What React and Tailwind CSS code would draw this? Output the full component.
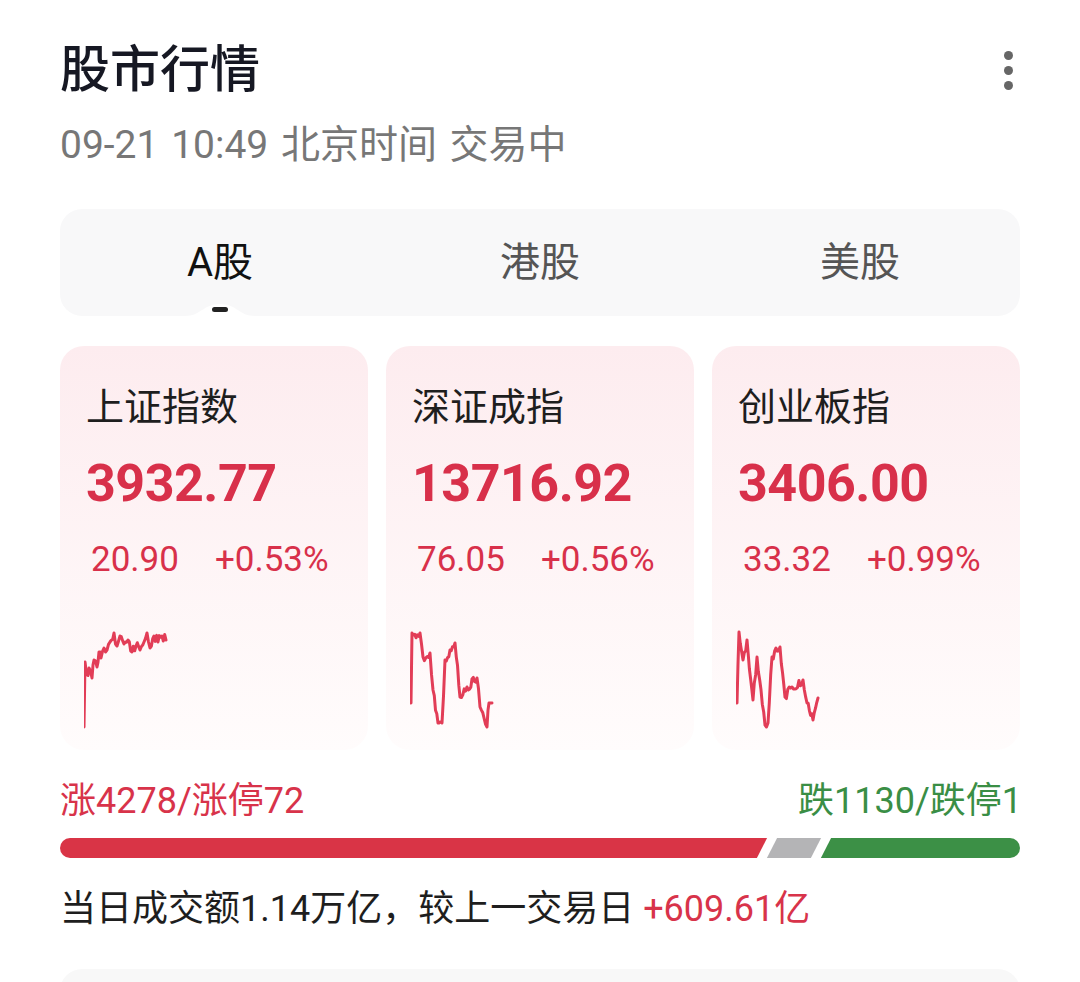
import React from 'react';

// jagged sparkline from a few key points
function sparkPoints(keys, amp, seed) {
  let s = seed;
  const rnd = () => {
    s = (s * 9301 + 49297) % 233280;
    return s / 233280;
  };
  const out = [];
  for (let i = 0; i < keys.length - 1; i++) {
    const [x1, y1] = keys[i];
    const [x2, y2] = keys[i + 1];
    const n = Math.max(1, Math.round((x2 - x1) / 1.3));
    for (let k = 0; k < n; k++) {
      const t = k / n;
      const j = k === 0 ? 0 : (rnd() - 0.5) * 2 * amp;
      const y = Math.min(97, Math.max(2, y1 + (y2 - y1) * t + j));
      out.push(`${(x1 + (x2 - x1) * t).toFixed(1)},${y.toFixed(1)}`);
    }
  }
  const last = keys[keys.length - 1];
  out.push(`${last[0]},${last[1]}`);
  return out.join(' ');
}

const indices = [
  {
    name: '上证指数',
    value: '3932.77',
    diff: '20.90',
    pct: '+0.53%',
    keys: [
      [0, 97], [1, 32], [3, 45], [5, 38], [8, 48], [10, 30], [13, 37], [15, 22], [17, 28],
      [20, 18], [23, 20], [26, 12], [30, 3], [33, 16], [36, 6], [40, 14], [44, 10], [48, 22],
      [52, 16], [56, 20], [60, 12], [63, 3], [66, 18], [70, 6], [74, 12], [78, 6], [82, 10],
    ],
    seed: 11,
  },
  {
    name: '深证成指',
    value: '13716.92',
    diff: '76.05',
    pct: '+0.56%',
    keys: [
      [1, 73], [2, 3], [10, 3], [13, 27], [20, 23], [23, 60], [28, 93], [32, 93], [35, 30],
      [40, 20], [45, 13], [50, 67], [57, 57], [67, 48], [70, 77], [77, 97], [79, 73], [82, 73],
    ],
    seed: 37,
  },
  {
    name: '创业板指',
    value: '3406.00',
    diff: '33.32',
    pct: '+0.99%',
    keys: [
      [1, 73], [3, 2], [7, 30], [11, 10], [17, 70], [21, 27], [29, 95], [32, 93], [36, 27],
      [44, 17], [49, 67], [56, 57], [67, 50], [71, 73], [77, 90], [82, 68],
    ],
    seed: 73,
  },
];

function IndexCard({ item }) {
  return (
    <div className="rounded-[24px] bg-linear-to-b from-[#fdecef] to-[#fffcfc] pl-[26px] pt-[39px] pb-[20px]">
      <div className="text-[38px] leading-[44px] text-[#1e1e1e]">{item.name}</div>
      <div className="mt-[25px] text-[52px] leading-[60px] font-bold text-[#d8304a] tracking-[-0.5px]">
        {item.value}
      </div>
      <div className="mt-[26px] pl-[5px] flex gap-9 text-[35px] leading-[40px] text-[#d8304a]">
        <span>{item.diff}</span>
        <span>{item.pct}</span>
      </div>
      <svg className="-ml-[2px] mt-[50px] block" width="100" height="100" viewBox="0 0 100 100">
        <polyline
          points={sparkPoints(item.keys, 5, item.seed)}
          fill="none"
          stroke="#e23d57"
          strokeWidth="3"
          strokeLinejoin="round"
          strokeLinecap="round"
        />
      </svg>
    </div>
  );
}

export default function App() {
  return (
    <div className="w-[1080px] h-[982px] overflow-hidden bg-white px-[60px] pt-10 font-['Roboto','Noto_Sans_CJK_SC',sans-serif]">
      {/* Header */}
      <div className="flex items-center justify-between">
        <h1 className="text-[50px] leading-[60px] font-medium text-[#161823]">股市行情</h1>
        <div className="mr-[7px] flex flex-col gap-[6px]">
          <span className="w-[9px] h-[9px] rounded-full bg-[#666]" />
          <span className="w-[9px] h-[9px] rounded-full bg-[#666]" />
          <span className="w-[9px] h-[9px] rounded-full bg-[#666]" />
        </div>
      </div>
      <p className="mt-[21px] text-[39px] leading-[48px] text-[#777] [word-spacing:3px]">
        09-21 10:49 北京时间 交易中
      </p>

      {/* Tabs */}
      <div className="relative mt-10 h-[107px] rounded-[22px] bg-[#f8f8f9] grid grid-cols-3 items-center">
        <div className="text-center text-[40px] text-[#111]">A股</div>
        <div className="text-center text-[40px] text-[#555]">港股</div>
        <div className="text-center text-[40px] text-[#555]">美股</div>
        <svg className="absolute bottom-0 left-[125px]" width="70" height="16" viewBox="0 0 70 16">
          <path d="M0 16 C 16 16, 18 4, 35 4 C 52 4, 54 16, 70 16 Z" fill="#fff" />
        </svg>
        <span className="absolute left-[152px] bottom-[4px] w-4 h-[5px] rounded-full bg-[#222]" />
      </div>

      {/* Index cards */}
      <div className="mt-[30px] grid grid-cols-3 gap-[18px]">
        {indices.map((it) => (
          <IndexCard key={it.name} item={it} />
        ))}
      </div>

      {/* Up / down counts */}
      <div className="mt-[29px] flex justify-between text-[36px] leading-[44px]">
        <span className="text-[#d8334a]">涨4278/涨停72</span>
        <span className="text-[#3a8e45] -mr-[2px]">跌1130/跌停1</span>
      </div>
      <div className="mt-[15px] h-5 rounded-full overflow-hidden flex gap-[10px]">
        <div className="-ml-[10px] w-[712px] shrink-0 bg-[#d93446] -skew-x-[27deg]" />
        <div className="w-[44px] shrink-0 bg-[#b4b4b6] -skew-x-[27deg]" />
        <div className="flex-1 -mr-[10px] bg-[#3c9046] -skew-x-[27deg]" />
      </div>

      <p className="mt-[29px] text-[36px] leading-[44px] text-[#1e1e1e]">
        当日成交额1.14万亿，较上一交易日 <span className="text-[#d8334a]">+609.61亿</span>
      </p>

      {/* Next panel peeking */}
      <div className="mt-[38px] h-[60px] rounded-t-[22px] bg-[#f8f8f8]" />
    </div>
  );
}
